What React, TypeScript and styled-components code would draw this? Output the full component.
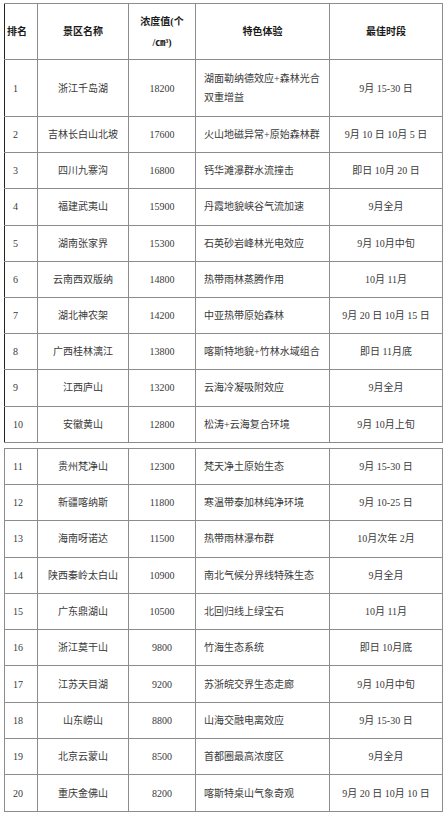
import React from 'react';
import styled, { createGlobalStyle } from 'styled-components';

const GlobalStyle = createGlobalStyle`
  html, body {
    margin: 0;
    padding: 0;
    background: #fff;
  }
  body {
    font-family: "Liberation Serif", "Noto Sans CJK SC", serif;
    color: #333;
  }
`;

const Page = styled.div`
  display: flex;
  flex-direction: column;
  gap: 5px;
  padding: 3px 0 0 4px;
  width: 438px;
`;

const Table = styled.table<{ $edge?: string }>`
  width: 438px;
  border-collapse: collapse;
  table-layout: fixed;
  font-size: 10px;
  border-left: 1px solid ${p => p.$edge || '#8c8c8c'};
  td, th {
    border: 1px solid #8c8c8c;
    vertical-align: middle;
    padding: 0;
  }
  td:first-child, th:first-child {
    border-left-color: ${p => p.$edge || '#8c8c8c'};
  }
`;

const Row = styled.tr<{ $h: number }>`
  height: ${p => p.$h}px;
`;

const HeadCell = styled.th<{ $align?: string }>`
  font-weight: bold;
  color: #1a1a1a;
  line-height: 21px;
  text-align: ${p => p.$align || 'center'};
  padding-left: ${p => (p.$align === 'left' ? '2px' : '0')} !important;
`;

const Cell = styled.td<{ $align?: string; $pad?: number }>`
  line-height: 19px;
  text-align: ${p => p.$align || 'center'};
  padding-left: ${p => p.$pad || 0}px !important;
  padding-right: ${p => (p.$align === 'left' ? 6 : 0)}px !important;
  color: #3a3a3a;
`;

type Spot = [number, string, string, string, string];

const first: Spot[] = [
  [1, '浙江千岛湖', '18200', '湖面勒纳德效应+森林光合双重增益', '9月 15-30 日'],
  [2, '吉林长白山北坡', '17600', '火山地磁异常+原始森林群', '9月 10 日 10月 5 日'],
  [3, '四川九寨沟', '16800', '钙华滩瀑群水流撞击', '即日 10月 20 日'],
  [4, '福建武夷山', '15900', '丹霞地貌峡谷气流加速', '9月全月'],
  [5, '湖南张家界', '15300', '石英砂岩峰林光电效应', '9月 10月中旬'],
  [6, '云南西双版纳', '14800', '热带雨林蒸腾作用', '10月 11月'],
  [7, '湖北神农架', '14200', '中亚热带原始森林', '9月 20 日 10月 15 日'],
  [8, '广西桂林漓江', '13800', '喀斯特地貌+竹林水域组合', '即日 11月底'],
  [9, '江西庐山', '13200', '云海冷凝吸附效应', '9月全月'],
  [10, '安徽黄山', '12800', '松涛+云海复合环境', '9月 10月上旬'],
];

const second: Spot[] = [
  [11, '贵州梵净山', '12300', '梵天净土原始生态', '9月 15-30 日'],
  [12, '新疆喀纳斯', '11800', '寒温带泰加林纯净环境', '9月 10-25 日'],
  [13, '海南呀诺达', '11500', '热带雨林瀑布群', '10月次年 2月'],
  [14, '陕西秦岭太白山', '10900', '南北气候分界线特殊生态', '9月全月'],
  [15, '广东鼎湖山', '10500', '北回归线上绿宝石', '10月 11月'],
  [16, '浙江莫干山', '9800', '竹海生态系统', '即日 10月底'],
  [17, '江苏天目湖', '9200', '苏浙皖交界生态走廊', '9月 10月中旬'],
  [18, '山东崂山', '8800', '山海交融电离效应', '9月 15-30 日'],
  [19, '北京云蒙山', '8500', '首都圈最高浓度区', '9月全月'],
  [20, '重庆金佛山', '8200', '喀斯特桌山气象奇观', '9月 20 日 10月 10 日'],
];

const Cols = () => (
  <colgroup>
    <col style={{ width: 33 }} />
    <col style={{ width: 91 }} />
    <col style={{ width: 67 }} />
    <col style={{ width: 134 }} />
    <col style={{ width: 113 }} />
  </colgroup>
);

const SpotRow = ({ s, h }: { s: Spot; h: number }) => (
  <Row $h={h}>
    <Cell $align="left" $pad={8}>{s[0]}</Cell>
    <Cell>{s[1]}</Cell>
    <Cell>{s[2]}</Cell>
    <Cell $align="left" $pad={8}>{s[3]}</Cell>
    <Cell>{s[4]}</Cell>
  </Row>
);

export default function App() {
  return (
    <>
      <GlobalStyle />
      <Page>
        <Table $edge="#222">
          <Cols />
          <thead>
            <Row $h={56}>
              <HeadCell $align="left">排名</HeadCell>
              <HeadCell>景区名称</HeadCell>
              <HeadCell>浓度值(个<br />/㎝³)</HeadCell>
              <HeadCell>特色体验</HeadCell>
              <HeadCell>最佳时段</HeadCell>
            </Row>
          </thead>
          <tbody>
            {first.map((s, i) => (
              <SpotRow key={s[0]} s={s} h={i === 0 ? 57 : 36.2} />
            ))}
          </tbody>
        </Table>
        <Table>
          <Cols />
          <tbody>
            {second.map(s => (
              <SpotRow key={s[0]} s={s} h={36.3} />
            ))}
          </tbody>
        </Table>
      </Page>
    </>
  );
}
